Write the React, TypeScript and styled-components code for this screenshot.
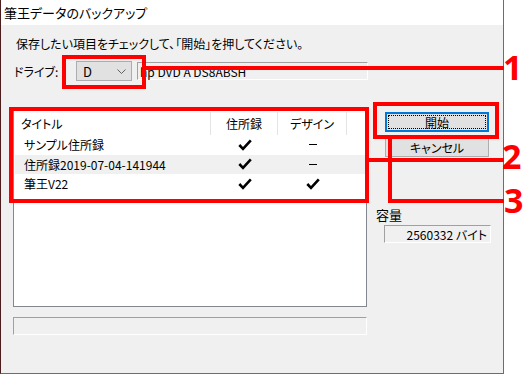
import React from 'react';
import styled, { createGlobalStyle } from 'styled-components';

const GlobalStyle = createGlobalStyle`
  html, body {
    margin: 0;
    padding: 0;
    background: #fff;
  }
  body {
    font-family: "Noto Sans CJK JP", "Noto Sans", sans-serif;
    font-size: 12px;
    color: #000;
    font-feature-settings: "palt";
  }
`;

type Entry = { title: string; address: boolean; design: boolean; hover?: boolean };

const entries: Entry[] = [
  { title: 'サンプル住所録', address: true, design: false },
  { title: '住所録2019-07-04-141944', address: true, design: false, hover: true },
  { title: '筆王V22', address: true, design: true },
];

// 注釈（赤枠・引き出し線）
const boxes = [
  { x: 62, y: 55, w: 84, h: 34 },
  { x: 9, y: 107, w: 360, h: 96 },
  { x: 373, y: 102, w: 126, h: 37 },
];

const lines = [
  { x: 146, y: 66, w: 358, h: 4 },
  { x: 369, y: 158, w: 135, h: 4 },
  { x: 388, y: 139, w: 4, h: 64 },
  { x: 388, y: 199, w: 116, h: 4 },
];

const marks = [
  { n: '1', x: 503, y: 50 },
  { n: '2', x: 502, y: 139 },
  { n: '3', x: 504, y: 183 },
];

const Check: React.FC = () => (
  <svg width="14" height="12" viewBox="0 0 14 12">
    <path d="M1.3 6 L5 9.8 L12.8 1.4" fill="none" stroke="#000" strokeWidth="2.6" />
  </svg>
);

const Chevron: React.FC = () => (
  <svg width="9" height="5" viewBox="0 0 9 5">
    <path d="M0.5 0.5 L4.5 4.5 L8.5 0.5" fill="none" stroke="#606060" strokeWidth="1" />
  </svg>
);

export const App: React.FC = () => {
  return (
    <Desktop>
      <GlobalStyle />
      <Window>
        <TitleBar>筆王データのバックアップ</TitleBar>
        <Body>
          <Instruction>保存したい項目をチェックして、「開始」を押してください。</Instruction>

          <DriveRow>
            <DriveLabel>ドライブ:</DriveLabel>
            <Combo>
              <span>D</span>
              <Chevron />
            </Combo>
            <SunkenField $width={231} $offset={5}>hp DVD A DS8ABSH</SunkenField>
          </DriveRow>

          <MainArea>
            <LeftColumn>
              <ListView>
                <HeaderRow>
                  <HeaderCell>タイトル</HeaderCell>
                  <HeaderCell $center>住所録</HeaderCell>
                  <HeaderCell $center>デザイン</HeaderCell>
                </HeaderRow>
                {entries.map((e) => (
                  <ItemRow key={e.title} $hover={e.hover}>
                    <TitleCell>{e.title}</TitleCell>
                    <MarkCell>{e.address ? <Check /> : <Dash />}</MarkCell>
                    <MarkCell>{e.design ? <Check /> : <Dash />}</MarkCell>
                  </ItemRow>
                ))}
              </ListView>
              <StatusField />
            </LeftColumn>

            <RightColumn>
              <ButtonStack>
                <Button $focused>開始</Button>
                <Button>キャンセル</Button>
              </ButtonStack>
              <CapacityLabel>容量</CapacityLabel>
              <CapacityRow>
                <SunkenField $width={107} $offset={8} $right>
                  2560332 バイト
                </SunkenField>
              </CapacityRow>
            </RightColumn>
          </MainArea>
        </Body>
      </Window>

      {boxes.map((b, i) => (
        <RedBox key={i} $x={b.x} $y={b.y} $w={b.w} $h={b.h} />
      ))}
      {lines.map((l, i) => (
        <RedLine key={i} $x={l.x} $y={l.y} $w={l.w} $h={l.h} />
      ))}
      {marks.map((m) => (
        <Mark key={m.n} $x={m.x} $y={m.y}>
          {m.n}
        </Mark>
      ))}
    </Desktop>
  );
};

export default App;

const Desktop = styled.div`
  position: relative;
  width: 524px;
  height: 375px;
  overflow: hidden;
  background: #fff;
`;

const Window = styled.div`
  box-sizing: border-box;
  width: 504px;
  height: 374px;
  display: flex;
  flex-direction: column;
  border-left: 1px solid #4b1d1d;
  border-right: 1px solid #6d6d6d;
  border-bottom: 1px solid #6d6d6d;
`;

const TitleBar = styled.div`
  height: 25px;
  flex: 0 0 25px;
  display: flex;
  align-items: center;
  padding-left: 3px;
  background: #fff;
  font-size: 13px;
`;

const Body = styled.div`
  flex: 1;
  background: #f0f0f0;
  padding: 11px 0 0 12px;
`;

const Instruction = styled.div`
  line-height: 16px;
  padding-left: 3px;
`;

const DriveRow = styled.div`
  margin-top: 9px;
  height: 20px;
  display: flex;
  align-items: center;
`;

const DriveLabel = styled.div`
  width: 62px;
  padding-left: 1px;
`;

const Combo = styled.div`
  box-sizing: border-box;
  width: 56px;
  height: 20px;
  display: flex;
  align-items: center;
  justify-content: space-between;
  padding: 0 5px 0 6px;
  background: #e1e1e1;
  border: 1px solid #adadad;
  font-size: 13px;
`;

const SunkenField = styled.div<{ $width: number; $offset: number; $right?: boolean }>`
  box-sizing: border-box;
  width: ${(p) => p.$width}px;
  height: 18px;
  margin-left: ${(p) => p.$offset}px;
  display: flex;
  align-items: center;
  justify-content: ${(p) => (p.$right ? 'flex-end' : 'flex-start')};
  padding: 0 3px 0 2px;
  border-top: 1px solid #a0a0a0;
  border-left: 1px solid #a0a0a0;
  border-right: 1px solid #fff;
  border-bottom: 1px solid #fff;
  font-size: 12px;
`;

const MainArea = styled.div`
  margin-top: 26px;
  display: grid;
  grid-template-columns: 354px 1fr;
`;

const LeftColumn = styled.div`
  display: flex;
  flex-direction: column;
`;

const ListView = styled.div`
  box-sizing: border-box;
  height: 200px;
  padding: 4px 0 0 1px;
  background: #fff;
  border: 1px solid #828790;
`;

const HeaderRow = styled.div`
  display: grid;
  grid-template-columns: 196px 67px 69px;
  height: 23px;
`;

const HeaderCell = styled.div<{ $center?: boolean }>`
  display: flex;
  align-items: center;
  justify-content: ${(p) => (p.$center ? 'center' : 'flex-start')};
  padding-left: ${(p) => (p.$center ? 0 : 6)}px;
  border-right: 1px solid #e5e5e5;
`;

const ItemRow = styled.div<{ $hover?: boolean }>`
  display: grid;
  grid-template-columns: 196px 67px 69px;
  height: 19.5px;
  align-items: center;
  background: ${(p) => (p.$hover ? '#f0f0f0' : 'transparent')};
`;

const TitleCell = styled.div`
  padding-left: 9px;
`;

const MarkCell = styled.div`
  display: flex;
  justify-content: center;
  align-items: center;
`;

const Dash = styled.span`
  display: block;
  width: 8px;
  height: 1px;
  background: #000;
`;

const StatusField = styled.div`
  box-sizing: border-box;
  margin-top: 10px;
  height: 18px;
  border-top: 1px solid #a0a0a0;
  border-left: 1px solid #a0a0a0;
  border-right: 1px solid #fff;
  border-bottom: 1px solid #fff;
`;

const RightColumn = styled.div`
  display: flex;
  flex-direction: column;
  align-items: flex-start;
  padding: 5px 0 0 9px;
`;

const ButtonStack = styled.div`
  display: flex;
  flex-direction: column;
  gap: 5px;
  padding-left: 9px;
`;

const Button = styled.div<{ $focused?: boolean }>`
  position: relative;
  box-sizing: border-box;
  width: 104px;
  height: 20px;
  display: flex;
  align-items: center;
  justify-content: center;
  background: #e1e1e1;
  border: ${(p) => (p.$focused ? '2px solid #0078d7' : '1px solid #adadad')};

  &::after {
    content: '';
    display: ${(p) => (p.$focused ? 'block' : 'none')};
    position: absolute;
    inset: 1px;
    border: 1px dotted #000;
  }
`;

const CapacityLabel = styled.div`
  margin-top: 50px;
  line-height: 16px;
  font-size: 13px;
`;

const CapacityRow = styled.div`
  margin-top: 2px;
  display: flex;
`;

const RedBox = styled.div<{ $x: number; $y: number; $w: number; $h: number }>`
  position: absolute;
  box-sizing: border-box;
  left: ${(p) => p.$x}px;
  top: ${(p) => p.$y}px;
  width: ${(p) => p.$w}px;
  height: ${(p) => p.$h}px;
  border: 4px solid #ff0000;
`;

const RedLine = styled.div<{ $x: number; $y: number; $w: number; $h: number }>`
  position: absolute;
  left: ${(p) => p.$x}px;
  top: ${(p) => p.$y}px;
  width: ${(p) => p.$w}px;
  height: ${(p) => p.$h}px;
  background: #ff0000;
`;

const Mark = styled.div<{ $x: number; $y: number }>`
  position: absolute;
  left: ${(p) => p.$x}px;
  top: ${(p) => p.$y}px;
  font-family: "Noto Sans", sans-serif;
  font-weight: 700;
  font-size: 34px;
  line-height: 34px;
  color: #ff0000;
`;
